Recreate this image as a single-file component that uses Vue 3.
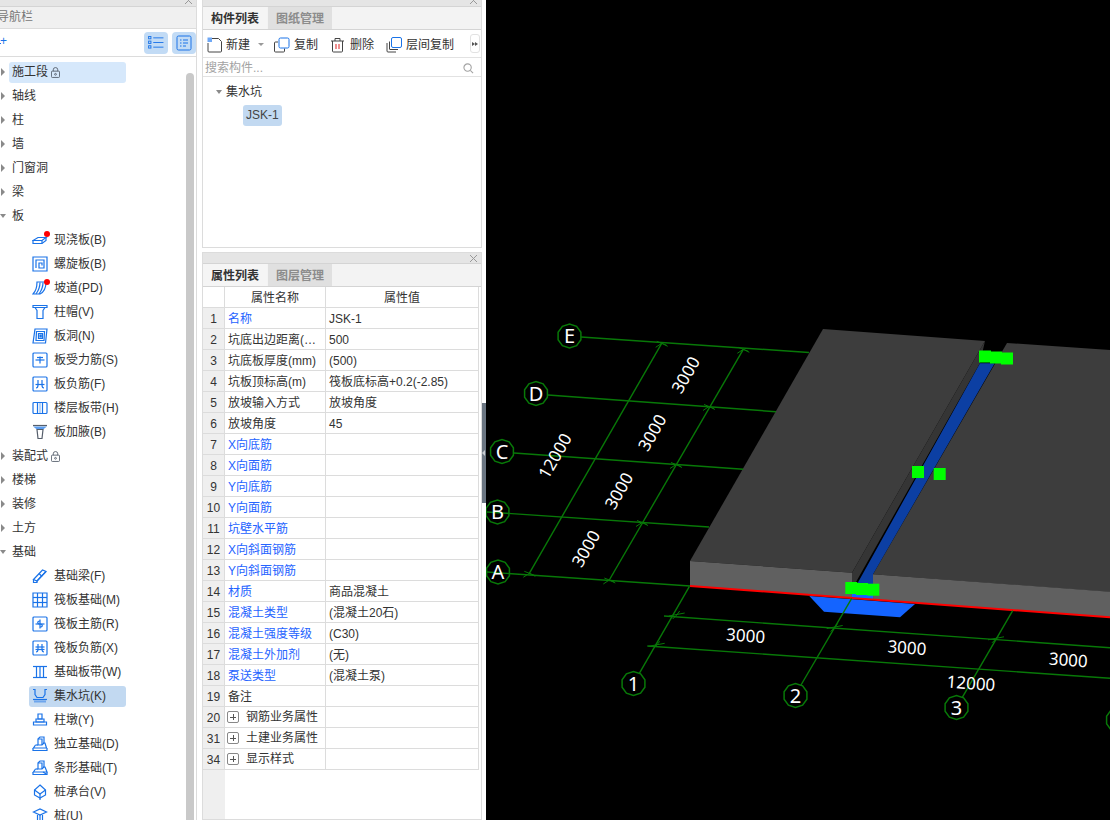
<script setup>
const tree = [
  { t: '施工段', lock: true, sel: true },
  { t: '轴线' }, { t: '柱' }, { t: '墙' }, { t: '门窗洞' }, { t: '梁' },
  { t: '板', open: true },
  { t: '现浇板(B)', leaf: true, dot: true, p: ['M1 8.500h9l4-3H6z', 'M1 8.500v3h9l4-3v-3', 'M10 8.500v3'] },
  { t: '螺旋板(B)', leaf: true, p: ['M1 1h14v14H1z', 'M4 12V4h8v8H7V7h3v2.500'] },
  { t: '坡道(PD)', leaf: true, dot: true, p: ['M5 2h9c0 5-2 10-6 12H1c3-3 4-8 4-12z', 'M8 2.500c0 4-1.500 8-4 11.500', 'M11 2.500c0 4-1.500 8-4 11.500'] },
  { t: '柱帽(V)', leaf: true, p: ['M1 1.500h14v2H1z', 'M3 3.500l2 3v8h6v-8l2-3'] },
  { t: '板洞(N)', leaf: true, p: ['M3 1h12l-1.500 14H1z', 'M4.500 3.500h8l-.5 9H4z', 'M6.500 5.500h4v5h-4z', 'M8 7h1.200v2H8z'] },
  { t: '板受力筋(S)', leaf: true, p: ['M2 1h12a1 1 0 0 1 1 1v12a1 1 0 0 1-1 1H2a1 1 0 0 1-1-1V2a1 1 0 0 1 1-1z', 'M3.500 8h9', 'M8 4.500v7', 'M5 5.500h6'] },
  { t: '板负筋(F)', leaf: true, p: ['M2 1h12a1 1 0 0 1 1 1v12a1 1 0 0 1-1 1H2a1 1 0 0 1-1-1V2a1 1 0 0 1 1-1z', 'M6 4v5c0 2-1 3-2 3', 'M10 4v5c0 2 1 3 2 3', 'M3.500 8.500h9'] },
  { t: '楼层板带(H)', leaf: true, p: ['M2 2.500h12a1 1 0 0 1 1 1v9a1 1 0 0 1-1 1H2a1 1 0 0 1-1-1v-9a1 1 0 0 1 1-1z', 'M5.500 3v10', 'M10.500 3v10'], dash: true },
  { t: '板加腋(B)', leaf: true, dark: true, p: ['M1 1.500h14', 'M5 5.500h6l-1 9H6z'], fill: 'M1 2.500h14l-4 3H5z' },
  { t: '装配式', lock: true },
  { t: '楼梯' }, { t: '装修' }, { t: '土方' },
  { t: '基础', open: true },
  { t: '基础梁(F)', leaf: true, p: ['M1.500 11.500l9-9.500 3.500 1.500-9 9.500z', 'M1.500 11.500v3h3.500v-1.500', 'M5 13l9-9.500', 'M7 5.500l3 3'] },
  { t: '筏板基础(M)', leaf: true, p: ['M1 1h14v14H1z', 'M1 5.500h14', 'M1 10.500h14', 'M5.500 1v14', 'M10.500 1v14'] },
  { t: '筏板主筋(R)', leaf: true, p: ['M2 1h12a1 1 0 0 1 1 1v12a1 1 0 0 1-1 1H2a1 1 0 0 1-1-1V2a1 1 0 0 1 1-1z', 'M3.500 8h9', 'M8 3.500v9', 'M8 5c-3 0-3 3 0 3s3 3 0 3'] },
  { t: '筏板负筋(X)', leaf: true, p: ['M2 1h12a1 1 0 0 1 1 1v12a1 1 0 0 1-1 1H2a1 1 0 0 1-1-1V2a1 1 0 0 1 1-1z', 'M6 4v5c0 2-1 3-2 3', 'M10 4v5c0 2 1 3 2 3', 'M3.500 7h9', 'M3.500 9.500h9'] },
  { t: '基础板带(W)', leaf: true, p: ['M1 2.500h14', 'M1 13.500h14', 'M4.500 2.500v11', 'M8 2.500v11', 'M11.500 2.500v11'] },
  { t: '集水坑(K)', leaf: true, sel2: true, p: ['M1 1.500h2v5l2 3h6l2-3v-5h2', 'M1 11.500h14'], dots: true },
  { t: '柱墩(Y)', leaf: true, p: ['M6 2h4v5H6z', 'M4 7h8v3H4z', 'M1.500 10h13v3h-13z'] },
  { t: '独立基础(D)', leaf: true, p: ['M6 3l2-2h4v6l-2 2H6z', 'M6 3h4v6', 'M3.500 9H6', 'M11 7h2l1.500 5H1.500l2-3', 'M1 12v2.500h14V12'] },
  { t: '条形基础(T)', leaf: true, p: ['M6 3l2-2h4v6l-2 2H6z', 'M6 3h4v6', 'M3.500 9H6', 'M11 7h2l2 5H1.500l2-3', 'M1 12v2.500h14V12', 'M11 12l4 2.500'] },
  { t: '桩承台(V)', leaf: true, p: ['M8 1l5.500 5v5L8 14 2.500 11V6z', 'M2.500 6L8 10l5.500-4', 'M8 10v6'] },
  { t: '桩(U)', leaf: true, p: ['M1.500 4L8 1l6.500 3L8 7z', 'M5.500 7v6.500L8 16l2.500-2.500V7', 'M8 7v9'] }
]

const names = [
  ['名称', 'JSK-1', 1], ['坑底出边距离(…', '500'], ['坑底板厚度(mm)', '(500)'], ['坑板顶标高(m)', '筏板底标高+0.2(-2.85)'],
  ['放坡输入方式', '放坡角度'], ['放坡角度', '45'], ['X向底筋', '', 1], ['X向面筋', '', 1], ['Y向底筋', '', 1], ['Y向面筋', '', 1],
  ['坑壁水平筋', '', 1], ['X向斜面钢筋', '', 1], ['Y向斜面钢筋', '', 1], ['材质', '商品混凝土', 1], ['混凝土类型', '(混凝土20石)', 1],
  ['混凝土强度等级', '(C30)', 1], ['混凝土外加剂', '(无)', 1], ['泵送类型', '(混凝土泵)', 1], ['备注', '']
]
const rows = names.map((r, i) => ({ n: i + 1, name: r[0], val: r[1], blue: !!r[2] }))
const groups = [{ n: 20, name: '钢筋业务属性' }, { n: 31, name: '土建业务属性' }, { n: 34, name: '显示样式' }]

function deca(cx, cy, r) {
  const pts = []
  for (let i = 0; i < 10; i++) {
    const a = Math.PI / 10 + (i * Math.PI) / 5
    pts.push((cx + r * Math.cos(a)).toFixed(1) + ',' + (cy + r * Math.sin(a)).toFixed(1))
  }
  return pts.join(' ')
}
const X = 486
const axes = [
  { l: 'E', x: 569.5, y: 336 }, { l: 'D', x: 536, y: 393.5 }, { l: 'C', x: 502, y: 451.5 }, { l: 'B', x: 497.5, y: 512 }, { l: 'A', x: 498, y: 572 },
  { l: '1', x: 633.5, y: 683.5 }, { l: '2', x: 795.5, y: 695.5 }, { l: '3', x: 956.5, y: 707.5 }, { l: '', x: 1118, y: 720 }
].map(a => ({ ...a, x: a.x - X, pts: deca(a.x - X, a.y, 12) }))
const L = (a, b, c, d) => ({ x1: a - X, y1: b, x2: c - X, y2: d })
const gridLines = [
  L(581, 337, 809, 352.500), L(548, 395, 776, 411.700), L(514, 453, 743.300, 469.300), L(487, 512, 709, 527), L(487, 572, 690, 586),
  L(661.700, 343.300, 529.300, 573.300), L(743.300, 349.300, 609.300, 580),
  L(689.300, 586.700, 639.300, 673.300), L(851.700, 598.300, 801, 685), L(1012.700, 610.700, 962.300, 697.300),
  L(664, 616, 1110, 647.700), L(647.300, 646, 1110, 678.300)
]
const ticksA = [[661.700, 343.300], [743.300, 349.300], [709, 406.500], [676, 464.500], [642, 522.500], [609.300, 580], [529.300, 573.300]]
const ticksB = [[676.700, 615], [834.700, 627.500], [996, 638.800], [656.700, 645.300]]
const tickPaths = [
  ...ticksA.map(([x, y]) => `M${x - X - 6} ${y + 4}L${x - X} ${y}L${x - X + 6} ${y + 3}M${x - X - 5} ${y - 2}L${x - X + 5} ${y + 2}`),
  ...ticksB.map(([x, y]) => `M${x - X - 8} ${y + 1}L${x - X + 8} ${y - 2}M${x - X - 4} ${y + 4}L${x - X} ${y}L${x - X + 3} ${y - 4}`)
]
const P = s => s.trim().split(/\s+/).map(p => { const [a, b] = p.split(','); return (a - X) + ',' + b }).join(' ')
const poly = {
  left: P('823,329 985,341 852,572.700 690,561'),
  right: P('1007,343 1110,350 1110,592 873,574.300'),
  frontL: P('690,561 852,572.700 852,598 690,586'),
  frontR: P('873,574.300 1110,591.700 1110,617.300 873,599.600'),
  wall: P('985,341 980,363 856,582 852,592 852,572.700'),
  blue: P('980,363.300 994.700,363.300 873,574.300 873,592 856,586'),
  pit: P('809.300,596 915,604 900,617.300 824,611.700'),
  pitTop: P('851,590 873,590 873,600 851,598')
}
const handles = [[979, 350.500], [990, 351.500], [1001, 352.500], [912, 466], [933.700, 468], [845.300, 582], [856, 583], [867.300, 583.700]].map(([x, y]) => ({ x: x - X, y }))
const dims = [
  { t: '3000', x: 586, y: 548.700, r: -60 }, { t: '3000', x: 619, y: 491, r: -60 }, { t: '3000', x: 652.300, y: 432.700, r: -60 }, { t: '3000', x: 685.700, y: 375, r: -60 },
  { t: '12000', x: 555, y: 456, r: -60 },
  { t: '3000', x: 745.700, y: 635.700, r: 4.200 }, { t: '3000', x: 907, y: 647.700, r: 4.200 }, { t: '3000', x: 1068.300, y: 660, r: 4.200 }, { t: '12000', x: 971, y: 683.300, r: 4.200 }
].map(d => ({ ...d, x: d.x - X }))
</script>

<template>
  <div class="app">
    <aside class="nav">
      <div class="strip"><svg class="close" viewBox="0 0 9 9"><path d="M1 1l7 7M8 1L1 8" /></svg></div>
      <div class="nav-title">导航栏</div>
      <div class="nav-tools">
        <span class="plus">+</span>
        <span class="tool-btn">
          <svg viewBox="0 0 18 14" class="tb-icon"><path d="M5.500 2h11M5.500 7h11M5.500 12h11" /><rect x="0.500" y="0.500" width="2.500" height="2.500" /><rect x="0.500" y="5.500" width="2.500" height="2.500" /><rect x="0.500" y="10.500" width="2.500" height="2.500" /></svg>
        </span>
        <span class="tool-btn">
          <svg viewBox="0 0 16 16" class="tb-icon2"><rect x="1" y="1" width="14" height="14" rx="1.500" /><path d="M4 5h1.500M7 5h5M4 8h1.500M7 8h5M4 11h1.500M7 11h3" /></svg>
        </span>
      </div>
      <div class="tree">
        <div class="scroll-thumb"></div>
        <div v-for="item in tree" :key="item.t" class="row" :class="{ leaf: item.leaf }">
          <template v-if="!item.leaf">
            <span class="arrow" :class="{ open: item.open }"></span>
            <span class="pill" :class="{ sel: item.sel }">
              {{ item.t }}
              <svg v-if="item.lock" class="lock" viewBox="0 0 10 12"><path d="M2.500 4.500V3a2.500 2.500 0 0 1 5 0v1.500" /><rect x="0.500" y="4.500" width="9" height="7" rx="1" /><circle cx="5" cy="8" r="1" /></svg>
            </span>
          </template>
          <span v-else class="leaf-pill" :class="{ sel2: item.sel2 }">
            <span class="icon-wrap">
              <svg class="ic" viewBox="0 0 16 16">
                <path v-if="item.fill" :d="item.fill" class="ic-fill" />
                <path v-for="d in item.p" :key="d" :d="d" :class="{ 'ic-dark': item.dark }" />
                <path v-if="item.dash" d="M8 3.500v9" stroke-dasharray="1 1" />
                <path v-if="item.dots" d="M2.500 13.500h11" stroke-dasharray="1 1" stroke-width="2" />
              </svg>
              <i v-if="item.dot" class="dot"></i>
            </span>
            <span>{{ item.t }}</span>
          </span>
        </div>
      </div>
    </aside>

    <section class="mid">
      <div class="panel top">
        <div class="strip"><svg class="close" viewBox="0 0 9 9"><path d="M1 1l7 7M8 1L1 8" /></svg></div>
        <div class="tabs"><span class="tab on">构件列表</span><span class="tab">图纸管理</span></div>
        <div class="toolbar">
          <span class="tbtn new">
            <svg viewBox="0 0 16 16" class="t-ic"><path d="M5 1.500h6.500l3 3V14a1 1 0 0 1-1 1H2a1 1 0 0 1-1-1V6" class="dk" /><rect x="0.500" y="0.500" width="4.500" height="4.500" class="chk" /></svg>
            新建
            <i class="caret"></i>
          </span>
          <span class="tbtn">
            <svg viewBox="0 0 16 16" class="t-ic"><path d="M4 5H1.500a1 1 0 0 0-1 1v8a1 1 0 0 0 1 1h8a1 1 0 0 0 1-1v-2.500" class="dk" /><rect x="5" y="1" width="10" height="10" rx="1.500" class="bl" /></svg>
            复制
          </span>
          <span class="tbtn">
            <svg viewBox="0 0 16 16" class="t-ic"><path d="M1 4h13M5 4V1.500h5V4M2.500 4v10a1 1 0 0 0 1 1h8a1 1 0 0 0 1-1V4" class="dk" /><path d="M6 7v5M9 7v5" class="rd" /></svg>
            删除
          </span>
          <span class="tbtn">
            <svg viewBox="0 0 16 16" class="t-ic"><path d="M1 6v8a1 1 0 0 0 1 1h8M3.500 4.500v7.500a.5.5 0 0 0 .5.500h8" class="dk" /><rect x="5.500" y="0.500" width="10" height="10" rx="1.500" class="bl" /></svg>
            层间复制
          </span>
          <span class="more"><i></i><i></i></span>
        </div>
        <div class="search">
          <span>搜索构件...</span>
          <svg viewBox="0 0 12 12" class="mag"><circle cx="5" cy="5" r="4" /><path d="M8 8l3 3" /></svg>
        </div>
        <div class="comp-tree">
          <div class="comp-group"><span class="arrow open"></span>集水坑</div>
          <div class="comp-item"><span>JSK-1</span></div>
        </div>
      </div>

      <div class="panel bottom">
        <div class="strip tall"><svg class="close" viewBox="0 0 9 9"><path d="M1 1l7 7M8 1L1 8" /></svg></div>
        <div class="tabs"><span class="tab on">属性列表</span><span class="tab">图层管理</span></div>
        <div class="grid">
          <div class="g-row head"><span class="c0 plain"></span><span class="c1">属性名称</span><span class="c2">属性值</span></div>
          <div v-for="r in rows" :key="r.n" class="g-row">
            <span class="c0">{{ r.n }}</span>
            <span class="c1" :class="{ blue: r.blue }">{{ r.name }}</span>
            <span class="c2">{{ r.val }}</span>
          </div>
          <div v-for="g in groups" :key="g.n" class="g-row">
            <span class="c0">{{ g.n }}</span>
            <span class="c1 grp"><i class="expand"></i>{{ g.name }}</span>
            <span class="c2"></span>
          </div>
          <div class="g-fill"><span class="c0 empty"></span></div>
        </div>
      </div>
    </section>

    <div class="split"><span class="handle"><i></i></span></div>

    <svg class="canvas" viewBox="0 0 624 820" width="624" height="820">
      <polygon :points="poly.pit" fill="#1464ff" />
      <polygon :points="poly.pitTop" fill="#1464ff" />
      <polygon :points="poly.left" fill="#3d3d3d" />
      <polygon :points="poly.right" fill="#3d3d3d" />
      <polygon :points="poly.wall" fill="#353535" />
      <polygon :points="poly.blue" fill="#0c3fa3" />
      <polygon :points="poly.frontL" fill="#606060" />
      <polygon :points="poly.frontR" fill="#606060" />
      <line :x1="204" :y1="586" :x2="624" :y2="617.300" stroke="#ff0000" stroke-width="2" />
      <line v-for="(l, i) in gridLines" :key="i" v-bind="l" stroke="#087808" stroke-width="1.400" />
      <path v-for="(d, i) in tickPaths" :key="'t' + i" :d="d" stroke="#087808" stroke-width="1" fill="none" />
      <rect v-for="(h, i) in handles" :key="'h' + i" :x="h.x" :y="h.y" width="12" height="12" fill="#00ff00" />
      <g v-for="a in axes" :key="a.l + a.x">
        <polygon :points="a.pts" fill="none" stroke="#087808" stroke-width="1.500" />
        <text :x="a.x" :y="a.y + 7" class="axis-label">{{ a.l }}</text>
      </g>
      <text v-for="(d, i) in dims" :key="'d' + i" class="dim" :transform="`translate(${d.x} ${d.y}) rotate(${d.r})`" y="6">{{ d.t }}</text>
    </svg>
  </div>
</template>

<style>
html, body { margin: 0; background: #fff; overflow: hidden; }
</style>

<style scoped>
.app {
  display: flex;
  width: 1110px;
  height: 820px;
  overflow: hidden;
  background: #fff;
  font: 12px/1 "Liberation Sans", "Noto Sans CJK SC", sans-serif;
  color: #333;
}
.nav {
  width: 197px;
  flex: none;
  display: flex;
  flex-direction: column;
  margin-right: 5px;
  border-right: 1px solid #dcdcdc;
  box-sizing: border-box;
  overflow: hidden;
}
.strip {
  height: 6px;
  background: #e5e5e5;
  border-bottom: 1px solid #d4d4d4;
  position: relative;
  overflow: hidden;
  flex: none;
}
.strip.tall { height: 10px; }
.close {
  position: absolute;
  right: 3px;
  top: -4px;
  width: 9px;
  height: 9px;
  fill: none;
  stroke: #999;
  stroke-width: 1;
}
.strip.tall .close { top: 1px; right: 3px; }
.nav-title {
  height: 21px;
  line-height: 21px;
  margin-left: -3px;
  background: #f0f0f0;
  color: #777;
  border-bottom: 1px solid #dcdcdc;
  flex: none;
  font-size: 12px;
}
.nav-tools {
  height: 27px;
  flex: none;
  display: flex;
  align-items: center;
  gap: 4px;
  border-bottom: 1px solid #dcdcdc;
  position: relative;
  justify-content: flex-end;
}
.plus {
  position: absolute;
  left: 0;
  top: 6px;
  color: #1a73e8;
  font-size: 12px;
  line-height: 12px;
}
.plus::before {
  content: "";
  position: absolute;
  left: -1px;
  top: 8px;
  width: 2px;
  height: 1px;
  background: #1a73e8;
}
.tool-btn {
  width: 24px;
  height: 22px;
  background: #c2dbf5;
  border-radius: 4px;
  display: flex;
  align-items: center;
  justify-content: center;
}
.tb-icon { width: 17px; height: 13px; fill: none; stroke: #1a73e8; stroke-width: 1; }
.tb-icon2 { width: 16px; height: 16px; fill: none; stroke: #1a73e8; stroke-width: 1; }
.tree {
  position: relative;
  flex: 1;
  padding-top: 3px;
  overflow: hidden;
}
.scroll-thumb {
  position: absolute;
  left: 186px;
  top: 16px;
  bottom: 0;
  width: 8px;
  background: #c9c9c9;
  border-radius: 4px 4px 0 0;
}
.row {
  height: 24px;
  display: flex;
  align-items: center;
  position: relative;
  flex: none;
}
.arrow {
  position: absolute;
  left: 1px;
  top: 8px;
  width: 0;
  height: 0;
  border-left: 4px solid #8a8a8a;
  border-top: 4px solid transparent;
  border-bottom: 4px solid transparent;
}
.arrow.open {
  left: 0;
  top: 10px;
  border-top: 4px solid #8a8a8a;
  border-left: 3.500px solid transparent;
  border-right: 3.500px solid transparent;
  border-bottom: 0;
}
.pill {
  margin-left: 9px;
  width: 117px;
  height: 21px;
  box-sizing: border-box;
  padding-left: 3px;
  border-radius: 3px;
  display: flex;
  align-items: center;
  gap: 3px;
}
.pill.sel { background: #d6e8fb; }
.lock { width: 9px; height: 11px; fill: none; stroke: #555e6b; stroke-width: 1; }
.leaf-pill {
  margin-left: 29px;
  width: 97px;
  height: 21px;
  display: flex;
  align-items: center;
  box-sizing: border-box;
  padding-left: 3px;
  border-radius: 3px;
  white-space: nowrap;
  gap: 6px;
}
.leaf-pill.sel2 { background: #c2d9f1; }
.icon-wrap { position: relative; width: 16px; height: 16px; flex: none; }
.ic { width: 16px; height: 16px; fill: none; stroke: #1a73e8; stroke-width: 1.200; display: block; }
.ic-fill { fill: #5b9df0; stroke: none; }
.ic-dark { stroke: #555e6b; }
.dot {
  position: absolute;
  left: 12px;
  top: -1px;
  width: 6px;
  height: 6px;
  border-radius: 50%;
  background: #f00;
}
.mid {
  width: 280px;
  flex: none;
  display: flex;
  flex-direction: column;
  gap: 4px;
}
.panel {
  border: 1px solid #dcdcdc;
  border-top: 0;
  box-sizing: border-box;
  position: relative;
}
.panel.top { height: 248px; }
.panel.bottom { flex: 1; border-top: 1px solid #dcdcdc; display: flex; flex-direction: column; min-height: 0; }
.tabs {
  height: 22px;
  background: #f3f3f3;
  display: flex;
  gap: 1px;
  flex: none;
  border-bottom: 1px solid #d4d4d4;
}
.tab {
  width: 64px;
  text-align: center;
  line-height: 24px;
  background: #e0e0e0;
  color: #8c8c8c;
  font-weight: 700;
}
.tab.on { background: #f5f5f5; color: #333; }
.toolbar {
  height: 25px;
  padding-top: 2px;
  display: flex;
  align-items: center;
  padding-left: 4px;
  gap: 12px;
  border-bottom: 1px solid #e2e2e2;
  position: relative;
}
.tbtn { display: flex; align-items: center; gap: 4px; white-space: nowrap; color: #333; }
.new { gap: 3px; }
.t-ic { width: 16px; height: 16px; fill: none; stroke-width: 1; }
.dk { stroke: #444; fill: none; }
.bl { stroke: #1a73e8; fill: #fff; }
.rd { stroke: #e02020; }
.chk { fill: #6fa8f5; stroke: none; }
.caret {
  width: 0;
  height: 0;
  margin-left: 5px;
  margin-right: -2px;
  border-top: 3px solid #999;
  border-left: 3px solid transparent;
  border-right: 3px solid transparent;
}
.more {
  position: absolute;
  right: 1px;
  top: 4px;
  width: 10px;
  height: 19px;
  background: #fff;
  border: 1px solid #e2e2e2;
  border-radius: 3px;
  box-sizing: border-box;
  display: flex;
  align-items: center;
  justify-content: center;
}
.more i {
  width: 0;
  height: 0;
  border-left: 3px solid #555;
  border-top: 2.500px solid transparent;
  border-bottom: 2.500px solid transparent;
}
.search {
  height: 16px;
  padding: 2px 7px 0 2px;
  display: flex;
  align-items: center;
  justify-content: space-between;
  color: #a3a3a3;
  border-bottom: 1px solid #e2e2e2;
}
.mag { width: 11px; height: 11px; fill: none; stroke: #a3a3a3; stroke-width: 1.200; }
.comp-tree { padding-top: 3px; }
.comp-group {
  height: 24px;
  line-height: 24px;
  padding-left: 23px;
  position: relative;
}
.comp-group .arrow { left: 13px; top: 10px; }
.comp-item { margin: 1px 0 0 40px; }
.comp-item span {
  display: inline-block;
  width: 39px;
  height: 21px;
  line-height: 21px;
  padding-left: 3px;
  box-sizing: border-box;
  background: #c2d9f1;
  border-radius: 3px;
  color: #444;
}
.grid { flex: 1; display: flex; flex-direction: column; width: 276px; min-height: 0; overflow: hidden; }
.g-row {
  display: flex;
  height: 21px;
  flex: none;
  box-sizing: border-box;
  border-bottom: 1px solid #dcdcdc;
  border-right: 1px solid #dcdcdc;
}
.c0 {
  width: 22px;
  flex: none;
  box-sizing: border-box;
  background: #efefef;
  border-right: 1px solid #dcdcdc;
  text-align: center;
  line-height: 22px;
}
.c0.plain { background: #fff; }
.c1, .c2 {
  box-sizing: border-box;
  line-height: 22px;
  padding-left: 3px;
  white-space: nowrap;
  overflow: hidden;
}
.c1 { width: 101px; flex: none; border-right: 1px solid #dcdcdc; }
.c2 { flex: 1; }
.head .c1, .head .c2 { text-align: center; padding-left: 0; }
.blue { color: #2563ff; }
.grp { display: flex; align-items: center; padding-left: 2px; gap: 7px; }
.expand {
  width: 12px;
  height: 12px;
  box-sizing: border-box;
  border: 1px solid #888;
  border-radius: 2px;
  position: relative;
  flex: none;
}
.expand::before, .expand::after {
  content: "";
  position: absolute;
  background: #555;
}
.expand::before { left: 2px; right: 2px; top: 4.500px; height: 1px; }
.expand::after { top: 2px; bottom: 2px; left: 4.500px; width: 1px; }
.g-fill { flex: 1; display: flex; }
.c0.empty { border-right: 0; width: 21.500px; }
.split {
  width: 4px;
  flex: none;
  background: #fff;
  display: flex;
  align-items: flex-start;
}
.handle {
  width: 4px;
  height: 100px;
  margin-top: 403px;
  background: #6b7682;
  display: flex;
  align-items: center;
}
.handle i {
  width: 0;
  height: 0;
  border-right: 3px solid #c8ccd0;
  border-top: 3px solid transparent;
  border-bottom: 3px solid transparent;
}
.canvas { flex: none; background: #000; display: block; }
.axis-label {
  fill: #fff;
  font-size: 20px;
  text-anchor: middle;
  font-family: "Noto Sans", sans-serif;
}
.dim {
  fill: #fff;
  font-size: 17px;
  text-anchor: middle;
  font-family: "Noto Sans", sans-serif;
}
</style>
